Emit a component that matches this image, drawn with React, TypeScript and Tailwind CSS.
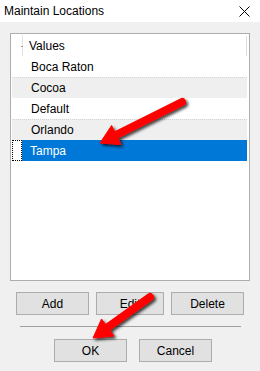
const rows = ["Boca Raton", "Cocoa", "Default", "Orlando", "Tampa"];

function Btn({ label, w = "w-[73px]" }: { label: string; w?: string }) {
  return (
    <div className={`${w} h-[23px] border border-[#adadad] bg-[#e1e1e1] flex items-center justify-center text-[12px] text-black`}>
      {label}
    </div>
  );
}

function Arrows() {
  return (
    <svg className="absolute left-0 top-0 pointer-events-none" width="260" height="371" viewBox="0 0 260 371">
      <defs>
        <filter id="sh" x="-20%" y="-20%" width="140%" height="140%">
          <feDropShadow dx="2" dy="2" stdDeviation="1.6" floodColor="#000" floodOpacity="0.75" />
        </filter>
      </defs>
      <g filter="url(#sh)" fill="#f00" stroke="#f00">
        <line x1="182" y1="102" x2="114" y2="136" strokeWidth="8" strokeLinecap="round" />
        <polygon points="100,143 111.6,125.5 121,144.5" strokeWidth="1" strokeLinejoin="round" />
        <line x1="150" y1="297" x2="106" y2="328.5" strokeWidth="8" strokeLinecap="round" />
        <polygon points="93,338 101.5,319 114,336" strokeWidth="1" strokeLinejoin="round" />
      </g>
    </svg>
  );
}

export default function App() {
  return (
    <div className="relative w-[260px] h-[371px] bg-[#f0f0f0] overflow-hidden" style={{ fontFamily: '"Liberation Sans", Arial, sans-serif' }}>
      <div className="h-[22px] bg-white flex items-center justify-between pl-[4px] pr-[10px]">
        <span className="text-[12px] text-black">Maintain Locations</span>
        <svg width="11" height="11" viewBox="0 0 11 11">
          <path d="M0.5 0.5 L10.5 10.5 M10.5 0.5 L0.5 10.5" stroke="#000" strokeWidth="1" />
        </svg>
      </div>

      <div className="mt-[11px] ml-[10px] w-[240px] h-[248px] border border-[#adadad] bg-white pt-[1px] pl-[1px] pr-[1px]">
        <div className="relative h-[21px] flex items-center pl-[17px] text-[12px] text-black">
          <div className="absolute left-[10px] top-0 h-[21px] w-px bg-[#e3e3e3]" />
          <div className="absolute left-[9px] top-[11px] h-px w-[2px] bg-[#a0a0a0]" />
          <div className="absolute right-[1px] top-[1px] h-[20px] w-px bg-[#dcdcdc]" />
          Values
        </div>
        {rows.map((r, i) => {
          const sel = r === "Tampa";
          const gray = i % 2 === 1;
          if (sel) {
            return (
              <div key={r} className="flex h-[21px]">
                <div className="w-[10px] h-[21px] border border-dotted border-black" />
                <div className="flex-1 bg-[#0078d7] text-white text-[12px] flex items-center pl-[8px] mr-[1px]">{r}</div>
              </div>
            );
          }
          return (
            <div
              key={r}
              className={`h-[21px] flex items-center pl-[19px] mr-[1px] text-[12px] text-black ${gray ? "bg-[#efefef] border-t border-dotted border-[#d4d4d4]" : "bg-white"}`}
            >
              {r}
            </div>
          );
        })}
      </div>

      <div className="mt-[11px] ml-[16px] flex gap-[7px]">
        <Btn label="Add" />
        <Btn label="Edit" w="w-[68px]" />
        <Btn label="Delete" />
      </div>

      <div className="mt-[11px] ml-[20px] w-[221px] h-px bg-[#a0a0a0]" />

      <div className="mt-[12px] ml-[54px] flex gap-[12px]">
        <Btn label="OK" />
        <Btn label="Cancel" />
      </div>

      <Arrows />
    </div>
  );
}
